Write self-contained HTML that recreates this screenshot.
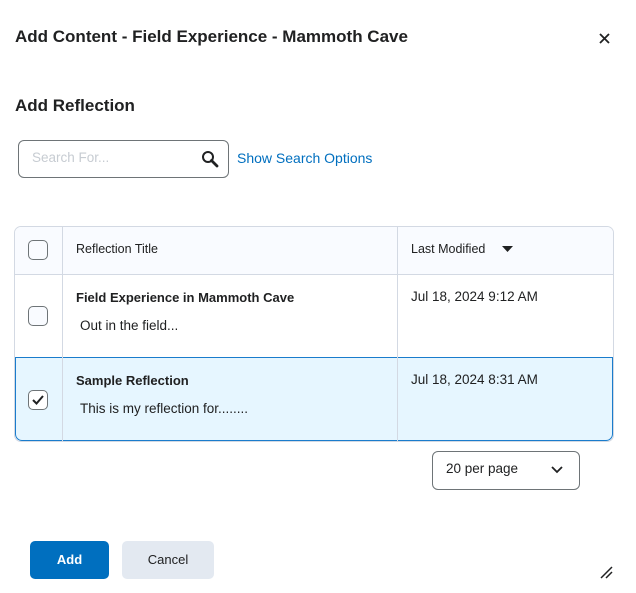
<!DOCTYPE html>
<html><head><style>
body{margin:0;width:636px;height:593px;background:#fff;font-family:"Liberation Sans",sans-serif;color:#202122;position:relative;overflow:hidden}
.a{position:absolute}
.cb{position:absolute;width:18px;height:18px;border:1px solid #6e7477;border-radius:5px;background:#f9fbff}
</style></head><body>
<div class="a" style="left:15px;top:27px;font-size:17px;font-weight:bold;color:#202122">Add Content - Field Experience - Mammoth Cave</div>
<svg class="a" style="left:599px;top:33px" width="11" height="11"><path d="M1 1L10 10M10 1L1 10" stroke="#202122" stroke-width="1.8"/></svg>
<div class="a" style="left:15px;top:96px;font-size:17px;font-weight:bold">Add Reflection</div>
<div class="a" style="left:18px;top:140px;width:209px;height:36px;border:1px solid #6e7477;border-radius:6px"></div>
<div class="a" style="left:32px;top:150px;font-size:13.5px;color:#c7ccd2">Search For...</div>
<svg class="a" style="left:201px;top:150px" width="18" height="18"><circle cx="7" cy="7" r="5" fill="none" stroke="#202122" stroke-width="2"/><path d="M10.5 10.5L16 16" stroke="#202122" stroke-width="2.8" stroke-linecap="round"/></svg>
<div class="a" style="left:237px;top:150px;font-size:14px;color:#006fbf">Show Search Options</div>

<div class="a" style="left:14px;top:226px;width:598px;height:214px;border:1px solid #d3d9e3;border-radius:7px;overflow:hidden">
 <div class="a" style="left:0;top:0;width:598px;height:47px;background:#f9fbff;border-bottom:1px solid #d3d9e3"></div>
 <div class="a" style="left:0;top:130px;width:596px;height:82px;background:#e6f6ff;border:1px solid #1a7ccc;border-radius:0 0 7px 7px"></div>
 <div class="a" style="left:47px;top:0;width:1px;height:214px;background:#d3d9e3"></div>
 <div class="a" style="left:382px;top:0;width:1px;height:214px;background:#d3d9e3"></div>
</div>
<div class="cb" style="left:28px;top:240px"></div>
<div class="a" style="left:76px;top:242px;font-size:12.5px">Reflection Title</div>
<div class="a" style="left:411px;top:242px;font-size:12.5px">Last Modified</div>
<svg class="a" style="left:502px;top:246px" width="11" height="7"><path d="M0 0H11L5.5 6Z" fill="#202122"/></svg>

<div class="cb" style="left:28px;top:306px"></div>
<div class="a" style="left:76px;top:290px;font-size:13px;font-weight:bold">Field Experience in Mammoth Cave</div>
<div class="a" style="left:80px;top:318px;font-size:13.5px">Out in the field...</div>
<div class="a" style="left:411px;top:289px;font-size:13.5px">Jul 18, 2024 9:12 AM</div>

<div class="cb" style="left:28px;top:390px;background:#fff"></div>
<svg class="a" style="left:31px;top:394px" width="14" height="12"><path d="M2 6L5.5 9.5L12 2" fill="none" stroke="#202122" stroke-width="2"/></svg>
<div class="a" style="left:76px;top:373px;font-size:13px;font-weight:bold">Sample Reflection</div>
<div class="a" style="left:80px;top:401px;font-size:13.5px">This is my reflection for........</div>
<div class="a" style="left:411px;top:372px;font-size:13.5px">Jul 18, 2024 8:31 AM</div>

<div class="a" style="left:432px;top:451px;width:146px;height:37px;border:1px solid #6e7477;border-radius:6px"></div>
<div class="a" style="left:446px;top:461px;font-size:13.5px">20 per page</div>
<svg class="a" style="left:551px;top:466px" width="12" height="8"><path d="M1 1L6 6L11 1" fill="none" stroke="#202122" stroke-width="1.8"/></svg>

<div class="a" style="left:30px;top:541px;width:79px;height:38px;background:#006fbf;border-radius:5px;color:#fff;font-size:13px;font-weight:bold;text-align:center;line-height:38px">Add</div>
<div class="a" style="left:122px;top:541px;width:92px;height:38px;background:#e3e9f1;border-radius:5px;font-size:13px;text-align:center;line-height:38px">Cancel</div>
<svg class="a" style="left:600px;top:566px" width="14" height="14"><path d="M1 12L12 1M6 12L12 6" stroke="#202122" stroke-width="1.5"/></svg>
</body></html>
